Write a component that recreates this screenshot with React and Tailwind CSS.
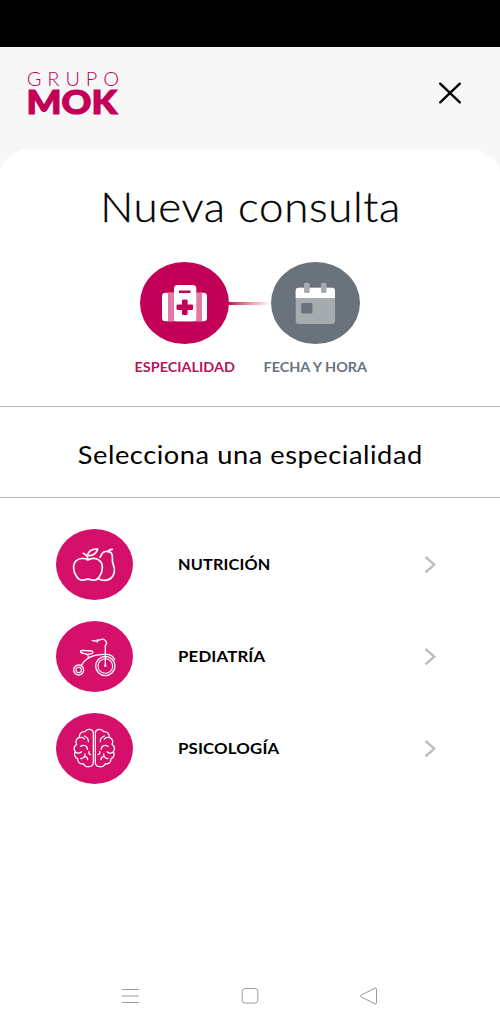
import React from 'react';

const AppleIcon = () => (
  <svg viewBox="18 27 231 213" className="w-[77px] h-[71px]" fill="none" stroke="#fff" strokeWidth="5" strokeLinecap="round" strokeLinejoin="round">
    <path d="M113 120c-10-7-25-6-34 2-12 11-10 33 1 48 7 10 16 12 24 9 6-2 13-2 19 0 9 3 19 0 25-9 12-17 12-38 1-48-10-9-25-9-36-2z" />
    <path d="M114 119c-1-9-5-15-14-19" />
    <path d="M112 107c1-12 13-21 31-20-2 12-14 21-31 20z" />
    <path d="M150 112c5-6 3-14 14-17 9-3 19 0 22 8 3 10-1 18 3 28 3 8 6 15 4 25-3 17-16 25-31 25-7 0-12-2-16-4" />
    <path d="M174 96c1-5 5-8 13-8" />
  </svg>
);

const TricycleIcon = () => (
  <svg viewBox="18 27 231 213" className="w-[77px] h-[71px]" fill="none" stroke="#fff" strokeWidth="4" strokeLinecap="round" strokeLinejoin="round">
    <circle cx="166" cy="162" r="29" />
    <circle cx="166" cy="162" r="22" strokeWidth="3.2" />
    <circle cx="86" cy="174" r="15" />
    <circle cx="86" cy="174" r="8" strokeWidth="3.2" />
    <path d="M166 162v-62c4-2 5-7 2-12-4-7-10-8-17-5-8 4-17 5-24 3M142 83v7" />
    <path d="M94 160c12-22 34-33 70-33" />
    <path d="M96 115l29 2c5 1 5 7 0 8l-12 2c-5 1-8-3-12-3l-5-1c-6-1-6-8 0-8zM113 128l3 10" />
    <path d="M166 127c14-1 24 6 28 16" />
    <circle cx="166" cy="161" r="3.5" fill="#fff" stroke="none" />
  </svg>
);

const BrainHalf = () => (
  <>
    <path d="M130 86c-1-11-19-14-25-3-11-1-18 7-17 17-10 3-12 13-8 21-8 6-9 15-4 22-5 9-1 18 7 21-1 10 7 17 17 15 6 13 28 12 30-2z" />
    <path d="M88 101c6-2 12 0 15 4M103 96c9 4 13 10 12 17M92 127c10-7 21-1 20 9M76 144c6 5 15 4 19-1M105 150c0 8-6 14-13 14M104 158c6 0 9 4 9 9M117 142c-2 6 1 9 5 10" />
  </>
);

const BrainIcon = () => (
  <svg viewBox="18 27 231 213" className="w-[77px] h-[71px]" fill="none" stroke="#fff" strokeWidth="3.8" strokeLinecap="round" strokeLinejoin="round">
    <BrainHalf />
    <g transform="translate(266 0) scale(-1 1)">
      <BrainHalf />
    </g>
  </svg>
);

const MedkitIcon = () => (
  <svg viewBox="0 0 89 82" className="w-[89px] h-[82px]">
    <rect x="22" y="30.7" width="45" height="28.6" rx="3.5" fill="#fff" />
    <path d="M28 30.7h6v28.6h-6zM56 30.7h6v28.6h-6z" fill="#df7ba5" />
    <rect x="34" y="23" width="22.3" height="36.3" rx="3.5" fill="#fff" />
    <rect x="39" y="28.5" width="11.5" height="2.5" fill="#c20057" />
    <rect x="42" y="37.5" width="5.6" height="15.6" rx="1.3" fill="#c20057" />
    <rect x="36.5" y="42.5" width="16.6" height="5.6" rx="1.3" fill="#c20057" />
  </svg>
);

const CalendarIcon = () => (
  <svg viewBox="0 0 89 82" className="w-[89px] h-[82px]">
    <rect x="24.7" y="25.7" width="39.3" height="36.3" rx="3" fill="#a6abaf" />
    <path d="M24.7 36v-7.3a3 3 0 0 1 3-3H61a3 3 0 0 1 3 3V36z" fill="#fff" />
    <rect x="33" y="20.7" width="5.7" height="10.4" rx="1.5" fill="#a6abaf" />
    <rect x="50" y="20.7" width="5.5" height="10.4" rx="1.5" fill="#a6abaf" />
    <rect x="30.2" y="41" width="11.2" height="10.4" rx="1.2" fill="#6a737c" />
  </svg>
);

const especialidades = [
  { nombre: 'NUTRICIÓN', icon: AppleIcon, ancho: 'scale-x-[1.085]' },
  { nombre: 'PEDIATRÍA', icon: TricycleIcon, ancho: 'scale-x-[1.12]' },
  { nombre: 'PSICOLOGÍA', icon: BrainIcon, ancho: 'scale-x-[1.12]' },
];

const App = () => {
  return (
    <div className="h-screen w-full flex flex-col bg-[#f7f7f7] font-['Lato',sans-serif] text-black overflow-hidden">
      <div className="h-[47px] bg-black shrink-0" />

      <header className="h-[102px] shrink-0 flex justify-between pl-[27px] pr-[37px]">
        <svg viewBox="0 0 92 48" className="w-[92px] h-12 mt-6 overflow-visible" fill="#c20057">
          <text x="-0.3" y="15.2" fontFamily="Lato" fontWeight="300" fontSize="20" textLength="92.5" lengthAdjust="spacing">GRUPO</text>
          <text x="-0.5" y="43" fontFamily="Lato" fontWeight="900" fontSize="31.5" stroke="#c20057" strokeWidth="1.2" textLength="90.5" lengthAdjust="spacingAndGlyphs">MOK</text>
        </svg>
        <button aria-label="Cerrar" className="h-[26px] mt-[33px]">
          <svg viewBox="0 0 26 26" className="size-[26px]" stroke="#000" strokeWidth="2.4" strokeLinecap="round">
            <path d="M3.2 3.7l19.6 18.6M22.8 3.7L3.2 22.3" />
          </svg>
        </button>
      </header>

      <main className="flex-1 flex flex-col bg-white rounded-t-[30px_26px]">
        <h1 className="h-[113px] pt-[29px] text-center text-[41px] leading-[58px] font-light whitespace-nowrap tracking-[0.6px]">
          <span className="inline-block scale-x-[1.07] [-webkit-text-stroke:0.3px_#000]">Nueva consulta</span>
        </h1>

        <div className="h-[144px] flex justify-center items-start">
          <div className="w-[89px] flex flex-col items-center">
            <div className="w-[89px] h-[82px] rounded-[50%] bg-[#c20057]"><MedkitIcon /></div>
            <span className="mt-[13px] text-[14px] leading-5 font-bold text-[#b8145c] whitespace-nowrap scale-x-[1.03]">ESPECIALIDAD</span>
          </div>
          <div className="w-[42px] h-[3px] mt-10 bg-linear-to-r from-[#c20057] to-white" />
          <div className="w-[89px] flex flex-col items-center">
            <div className="w-[89px] h-[82px] rounded-[50%] bg-[#6a737c]"><CalendarIcon /></div>
            <span className="mt-[13px] text-[14px] leading-5 font-bold text-[#6a737c] whitespace-nowrap scale-x-[1.03]">FECHA Y HORA</span>
          </div>
        </div>

        <h2 className="h-[92px] border-y border-[#b9b9b9] flex justify-center items-center pt-1.5 text-[25px] whitespace-nowrap">
          <span className="inline-block tracking-[0.5px] scale-x-[1.09]">Selecciona una especialidad</span>
        </h2>

        <ul className="pt-[31px] pl-14 pr-16 flex flex-col gap-[21px]">
          {especialidades.map(({ nombre, icon: Icon, ancho }) => (
            <li key={nombre} className="h-[71px] flex items-center">
              <div className="w-[77px] h-[71px] rounded-[50%] bg-[#d5106a] shrink-0"><Icon /></div>
              <span className={`ml-[45px] mr-auto pb-0.5 text-[15px] leading-5 font-bold tracking-[0.15px] origin-left ${ancho}`}>{nombre}</span>
              <svg viewBox="0 0 12 18" className="w-3 h-[18px]" fill="none" stroke="#bdbdbd" strokeWidth="2.4">
                <path d="M1.5 1L10.3 8.7l-8.8 7.7" />
              </svg>
            </li>
          ))}
        </ul>

        <nav className="mt-auto h-[56px] flex justify-between items-center pl-[121px] pr-[122px]">
          <svg viewBox="0 0 18 18" className="size-[18px]" stroke="#9a9a9a" strokeWidth="1">
            <path d="M.8 2.5h17M.8 9h17M.8 15.5h17" />
          </svg>
          <svg viewBox="0 0 18 18" className="size-[18px]" fill="none" stroke="#9a9a9a" strokeWidth="1">
            <rect x="1.2" y="1.5" width="15.6" height="14.6" rx="3" />
          </svg>
          <svg viewBox="0 0 18 18" className="size-[18px]" fill="none" stroke="#9a9a9a" strokeWidth="1" strokeLinejoin="round">
            <path d="M.9 8.2l14-7q1.6-.5 1.6 1v13.6q0 1.5-1.6 1l-14-7q-1-.8 0-1.6z" />
          </svg>
        </nav>
      </main>
    </div>
  );
};

export default App;
